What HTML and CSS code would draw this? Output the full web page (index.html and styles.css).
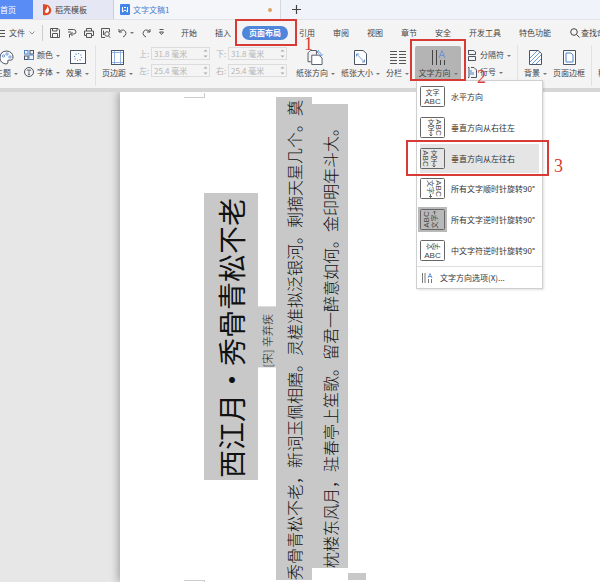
FILE: index.html
```html
<!DOCTYPE html>
<html lang="zh-CN">
<head>
    <meta charset="UTF-8">
    <title>文字文稿1</title>
    <link rel="stylesheet" href="styles.css">
</head>
<body>
    <div class="tabs">
        <button class="tab tab-home">首页</button>
        <button class="tab tab-shell">
            <svg width="10" height="12" viewBox="0 0 10 12"><path d="M1 0L6 1Q10 4 9 8Q7 12 1 11Z" fill="#dd4a24"/><path d="M5 2Q8 5 6.500 8Q4.500 10 3 8Q3 6 4.500 5Q5.500 4 5 2Z" fill="#fff"/></svg>
            稻壳模板
        </button>
        <button class="tab tab-doc">
            <svg width="10" height="11" viewBox="0 0 10 11"><rect width="10" height="11" rx="1" fill="#4285e8"/><path d="M2.500 3V8L5 6L7.500 8V3M4 3.500H6" fill="none" stroke="#fff"/></svg>
            文字文稿1
            <span class="unsaved"></span>
        </button>
        <button class="tab-add" aria-label="新建"><svg width="9" height="9" viewBox="0 0 9 9"><path d="M4.500 0V9M0 4.500H9" stroke="#444" stroke-width="1.200"/></svg></button>
    </div>

    <div class="menubar">
        <button class="file-btn">
            <svg width="5" height="8" viewBox="0 0 5 8"><path d="M0 1.500H5M0 4.500H5M0 7.500H5" stroke="#555"/></svg>
            文件
            <svg width="6" height="4" viewBox="0 0 6 4"><path d="M0.500 0.500L3 3L5.500 0.500" fill="none" stroke="#777" stroke-width="0.800"/></svg>
        </button>
        <span class="bar-line"></span>
        <div class="quick">
            <button aria-label="保存"><svg width="10" height="10" viewBox="0 0 10 10"><path d="M0.500 0.500H8L9.500 2V9.500H0.500ZM2.500 0.500V3H7V0.500M2.500 9.500V5.500H7.500V9.500"/></svg></button>
            <button aria-label="输出"><svg width="10" height="10" viewBox="0 0 10 10"><path d="M1 1.500H6.500Q9 1.500 9 4Q9 6 6.500 6H3.500M1 4H4M5.500 4L3.500 6L5.500 8M2.500 6V9.500"/></svg></button>
            <button aria-label="打印"><svg width="10" height="10" viewBox="0 0 10 10"><path d="M2.500 3V0.500H7.500V3M2.500 7.500H0.500V3H9.500V7.500H7.500M2.500 5.500H7.500V9.500H2.500Z"/></svg></button>
            <button aria-label="打印预览"><svg width="10" height="10" viewBox="0 0 10 10"><path d="M4 9.500H0.500V0.500H8.500V4M7.500 8L9.500 9.800M2.500 2.500V7"/><circle cx="6" cy="6" r="2.300"/></svg></button>
            <button class="undo" aria-label="撤销"><svg width="9" height="10" viewBox="0 0 9 10"><path d="M1 1V4H4M1 4Q3 1.500 5.500 2Q8 3 8 5.500Q7.500 8 5 9"/></svg><i class="caret"></i></button>
            <button aria-label="恢复"><svg width="9" height="10" viewBox="0 0 9 10"><path d="M8 1V4H5M8 4Q6 1.500 3.500 2Q1 3 1 5.500Q1.500 8 4 9"/></svg></button>
            <button aria-label="更多"><svg width="7" height="7" viewBox="0 0 7 7"><path d="M1.500 0.500H5.500M1.500 3H5.500L3.500 5.500Z"/></svg></button>
        </div>
        <div class="menu-tabs">
            <button>开始</button>
            <button>插入</button>
            <div class="marked">
                <button class="active">页面布局</button>
                <span class="frame frame-1"></span><span class="num num-1">1</span>
            </div>
            <button>引用</button>
            <button>审阅</button>
            <button>视图</button>
            <button>章节</button>
            <button>安全</button>
            <button>开发工具</button>
            <button>特色功能</button>
        </div>
        <button class="search">
            <svg width="10" height="10" viewBox="0 0 10 10"><circle cx="4" cy="4" r="3.300" fill="none" stroke="#444"/><path d="M6.500 6.500L9.500 9.500" stroke="#444"/></svg>
            查找命令
        </button>
    </div>

    <div class="ribbon">
        <button class="tool theme">
            <svg width="15" height="15" viewBox="0 0 15 15"><path d="M1 8Q1 1 8 1Q14 2 14 7Q14 11 10 10Q8 10 9 12Q9 14 7 14Q1 13 1 8Z" fill="#fff" stroke="#4c5563"/><circle cx="4.500" cy="6" r="1.200" fill="none" stroke="#4c82cf" stroke-width="0.800"/><circle cx="8" cy="4" r="1.200" fill="none" stroke="#4c82cf" stroke-width="0.800"/><circle cx="11" cy="7" r="1.200" fill="none" stroke="#4c82cf" stroke-width="0.800"/></svg>
            <span>主题<i class="caret"></i></span>
        </button>
        <div class="stack">
            <button class="mini">
                <svg width="10" height="10" viewBox="0 0 10 10" fill="none" stroke="#4c5563"><rect x="0.500" y="0.500" width="3.500" height="3.500" stroke="#4c82cf"/><rect x="6" y="0.500" width="3.500" height="3.500"/><rect x="0.500" y="6" width="3.500" height="3.500"/><rect x="5" y="5" width="4.500" height="4.500" stroke="#4c82cf"/></svg>
                <span>颜色<i class="caret"></i></span>
            </button>
            <button class="mini">
                <svg width="10" height="10" viewBox="0 0 10 10" fill="none" stroke="#4c5563"><circle cx="5" cy="5" r="4.500"/><path d="M3 3.500V3H7V3.500M5 3V7.500M4 7.500H6" stroke-width="0.800"/></svg>
                <span>字体<i class="caret"></i></span>
            </button>
        </div>
        <button class="tool">
            <svg width="16" height="15" viewBox="0 0 16 15"><rect x="0.500" y="0.500" width="15" height="13" fill="#fff" stroke="#4c5563"/><circle cx="8" cy="7" r="3.500" fill="none" stroke="#4c82cf" stroke-width="1.200" stroke-dasharray="1 1.700"/></svg>
            <span>效果<i class="caret"></i></span>
        </button>
        <span class="split"></span>
        <button class="tool">
            <svg width="13" height="15" viewBox="0 0 13 15"><rect x="0.500" y="0.500" width="12" height="14" fill="#fff" stroke="#4c5563"/><path d="M3.500 1V14M9.500 1V14M1 2.500H12M1 12.500H12" stroke="#79a5dd" stroke-width="0.800"/></svg>
            <span>页边距<i class="caret"></i></span>
        </button>
        <div class="margins">
            <label for="mTop">上:</label>
            <div class="spin"><input type="text" id="mTop" value="31.8 毫米" disabled><svg width="5" height="9" viewBox="0 0 5 9"><path d="M0.500 2.500L2.500 0.500L4.500 2.500ZM0.500 6.500L2.500 8.500L4.500 6.500Z"/></svg></div>
            <label for="mBottom" class="second">下:</label>
            <div class="spin"><input type="text" id="mBottom" value="31.8 毫米" disabled><svg width="5" height="9" viewBox="0 0 5 9"><path d="M0.500 2.500L2.500 0.500L4.500 2.500ZM0.500 6.500L2.500 8.500L4.500 6.500Z"/></svg></div>
            <label for="mLeft">左:</label>
            <div class="spin"><input type="text" id="mLeft" value="25.4 毫米" disabled><svg width="5" height="9" viewBox="0 0 5 9"><path d="M0.500 2.500L2.500 0.500L4.500 2.500ZM0.500 6.500L2.500 8.500L4.500 6.500Z"/></svg></div>
            <label for="mRight" class="second">右:</label>
            <div class="spin"><input type="text" id="mRight" value="25.4 毫米" disabled><svg width="5" height="9" viewBox="0 0 5 9"><path d="M0.500 2.500L2.500 0.500L4.500 2.500ZM0.500 6.500L2.500 8.500L4.500 6.500Z"/></svg></div>
        </div>
        <button class="tool">
            <svg width="17" height="16" viewBox="0 0 17 16" fill="none" stroke="#4c5563"><path d="M4 12.500H0.500V3L3 0.500H9.500V5"/><path d="M4.500 5.500H12L15.500 8.500V15.500H4.500Z" fill="#fff"/><path d="M10 2Q14.500 1 14.500 6M12.500 4.500L14.500 6.500L16.500 4.500M12 0L10 2L12 4" stroke="#4c82cf" stroke-width="0.800"/></svg>
            <span>纸张方向<i class="caret"></i></span>
        </button>
        <button class="tool">
            <svg width="13" height="15" viewBox="0 0 13 15"><path d="M0.500 0.500H9L12.500 3.500V14.500H0.500Z" fill="#fff" stroke="#4c5563"/><path d="M2.500 4L10.500 12M2.500 6.500V4H5M10.500 9.500V12H8" fill="none" stroke="#4c82cf" stroke-width="0.800"/></svg>
            <span>纸张大小<i class="caret"></i></span>
        </button>
        <button class="tool">
            <svg width="16" height="15" viewBox="0 0 16 15"><path d="M0 1.500H7M0 4.500H7M0 7.500H7M0 10.500H7M0 13.500H7M9 1.500H16M9 4.500H16M9 7.500H16M9 10.500H16M9 13.500H16" stroke="#555"/></svg>
            <span>分栏<i class="caret"></i></span>
        </button>
        <div class="marked">
            <button class="tool pressed">
                <svg width="15" height="15" viewBox="0 0 15 15" fill="none" stroke="#444"><path d="M1.500 0V15M5.500 0V15M9.500 10V15M13.500 10V15"/><path d="M8 8L11 0.500L14 8M9 5.500H13" stroke="#6f93d6"/></svg>
                <span>文字方向<i class="caret"></i></span>
            </button>
            <div class="dropdown">
                <button class="item">
                    <svg class="dir" viewBox="0 0 25 21"><rect x="0.500" y="0.500" width="24" height="20" rx="1"/><text x="12.500" y="9">文字</text><text class="abc" x="12.500" y="18">ABC</text></svg>
                    水平方向
                </button>
                <button class="item">
                    <svg class="dir" viewBox="0 0 25 21"><rect x="0.500" y="0.500" width="24" height="20" rx="1"/><text x="11" y="8">文</text><text x="11" y="15">字</text><path d="M11 15.500V19M9.500 17.500L11 19L12.500 17.500"/><text class="abc" transform="translate(16 10.500) rotate(90)">ABC</text></svg>
                    垂直方向从右往左
                </button>
                <div class="marked">
                    <button class="item hover">
                        <svg class="dir" viewBox="0 0 25 21"><rect x="0.500" y="0.500" width="24" height="20" rx="1"/><text x="14" y="8">文</text><text x="14" y="15">字</text><path d="M14 15.500V19M12.500 17.500L14 19L15.500 17.500"/><text class="abc" transform="translate(3 10.500) rotate(90)">ABC</text></svg>
                        垂直方向从左往右
                    </button>
                    <span class="frame frame-3"></span><span class="num num-3">3</span>
                </div>
                <button class="item">
                    <svg class="dir" viewBox="0 0 25 21"><rect x="0.500" y="0.500" width="24" height="20" rx="1"/><text transform="translate(8 9) rotate(90)">文字</text><path d="M10.500 16V19.500M9 18L10.500 19.500L12 18"/><text class="abc" transform="translate(16 10.500) rotate(90)">ABC</text></svg>
                    所有文字顺时针旋转90°
                </button>
                <button class="item current">
                    <svg class="dir" viewBox="0 0 25 21"><rect x="0.500" y="0.500" width="24" height="20" rx="1"/><text class="abc" transform="translate(9 10.500) rotate(-90)">ABC</text><text transform="translate(17 12.500) rotate(-90)">文字</text><path d="M14.500 5.500V2M13 3.500L14.500 2L16 3.500"/></svg>
                    所有文字逆时针旋转90°
                </button>
                <button class="item">
                    <svg class="dir" viewBox="0 0 25 21"><rect x="0.500" y="0.500" width="24" height="20" rx="1"/><text transform="translate(11.500 6.500) rotate(-90)">文</text><text transform="translate(18.500 6.500) rotate(-90)">字</text><text class="abc" x="12.500" y="18">ABC</text></svg>
                    中文字符逆时针旋转90°
                </button>
                <button class="item options">
                    <svg width="11" height="10" viewBox="0 0 11 10" fill="none" stroke="#555" stroke-width="0.800"><path d="M0.500 0V10M3 0V10M6.500 6V10M9.500 6V10"/><path d="M6 5L8 0.500L10 5M6.500 3.500H9.500" stroke="#4c82cf"/></svg>
                    文字方向选项(X)...
                </button>
            </div>
            <span class="frame frame-2"></span><span class="num num-2">2</span>
        </div>
        <div class="stack">
            <button class="mini">
                <svg width="10" height="11" viewBox="0 0 10 11" fill="none" stroke="#4c5563"><path d="M1.500 0V4.500H8.500V2L7 0.500H1.500M1.500 11V6.500H8.500V10.500H1.500"/></svg>
                <span>分隔符<i class="caret"></i></span>
            </button>
            <button class="mini">
                <svg width="10" height="11" viewBox="0 0 10 11" fill="none" stroke="#4c5563"><path d="M4 0.500H7L9.500 3V10.500H4M1 0.500H2V10.500H1"/><path d="M4 3V8M6 5V8" stroke="#4c82cf"/></svg>
                <span>行号<i class="caret"></i></span>
            </button>
        </div>
        <span class="split"></span>
        <button class="tool">
            <svg width="13" height="15" viewBox="0 0 13 15"><path d="M0.500 0.500H9L12.500 3.500V14.500H0.500Z" fill="#fff" stroke="#4c5563"/><path d="M1 8L8 1M1 12L11 2M3 14L12 5M7 14L12 9" stroke="#4c82cf" stroke-width="0.800"/></svg>
            <span>背景<i class="caret"></i></span>
        </button>
        <button class="tool">
            <svg width="13" height="15" viewBox="0 0 13 15"><path d="M0.500 0.500H12.500V14.500H0.500Z" fill="#fff" stroke="#4c5563"/><path d="M3 3H8L10 5V12H3Z" fill="#fff" stroke="#4c82cf"/></svg>
            <span>页面边框</span>
        </button>
        <span class="split"></span>
        <button class="tool">
            <svg width="16" height="15" viewBox="0 0 16 15"><rect x="2.500" y="0.500" width="11" height="14" fill="#fff" stroke="#4c5563"/></svg>
            <span>稿纸设置</span>
        </button>
    </div>

    <div class="workspace">
        <div class="page">
            <span class="corner corner-top"></span>
            <span class="corner corner-bottom"></span>
            <h1 class="line title">西江月・秀骨青松不老</h1>
            <p class="line author">[宋] 辛弃疾</p>
            <p class="line verse verse-1">秀骨青松不老，新词玉佩相磨。灵槎准拟泛银河。剩摘天星几个。奠</p>
            <p class="line verse verse-2">枕楼东风月，驻春亭上笙歌。留君一醉意如何。金印明年斗大。</p>
            <span class="line-end"></span>
        </div>
    </div>
</body>
</html>
```

FILE: styles.css
```css
* {
    box-sizing: border-box;
}
body {
    margin: 0;
    height: 100vh;
    display: flex;
    flex-direction: column;
    overflow: hidden;
    background: #f4f4f4;
    color: #444;
    font-family: "Noto Sans CJK SC", sans-serif;
    font-size: 8px;
    line-height: 12px;
}
button {
    display: flex;
    align-items: center;
    flex-shrink: 0;
    margin: 0;
    padding: 0;
    border: none;
    background: none;
    color: inherit;
    font: inherit;
    white-space: nowrap;
    cursor: pointer;
}
svg {
    display: block;
    flex-shrink: 0;
}
.caret {
    display: inline-block;
    margin-left: 3px;
    border: 2px solid transparent;
    border-top-color: #777;
    border-bottom: none;
    vertical-align: middle;
}

/* document tabs */
.tabs {
    display: flex;
    flex-shrink: 0;
    height: 20px;
    background: #f1f3fa;
    border-bottom: 1px solid #e2e4ea;
}
.tab {
    gap: 3px;
}
.tab-home {
    width: 33px;
    background: #5a8cf5;
    color: #fff;
}
.tab-shell {
    width: 81px;
    padding-left: 9px;
    background: #e5e8f4;
    border-right: 1px solid #c9cdda;
}
.tab-doc {
    width: 167px;
    padding: 0 8px 0 6px;
    background: #f5f6fa;
    border-right: 1px solid #d6d9e2;
    color: #4a7fd0;
}
.unsaved {
    width: 4px;
    height: 4px;
    margin-left: auto;
    border-radius: 50%;
    background: #d9a560;
}
.tab-add {
    padding: 0 11px;
}

/* menu bar */
.menubar {
    display: flex;
    flex-shrink: 0;
    align-items: center;
    height: 25px;
}
.file-btn {
    gap: 4px;
    width: 42px;
}
.bar-line {
    flex-shrink: 0;
    width: 1px;
    height: 16px;
    background: #ccc;
}
.quick {
    display: flex;
    flex-shrink: 0;
    gap: 7px;
    width: 138px;
    padding-left: 7px;
}
.quick svg {
    fill: none;
    stroke: #555;
    stroke-width: 1;
}
.undo {
    padding-right: 1px;
}
.menu-tabs {
    display: flex;
    flex-shrink: 0;
    align-items: center;
    gap: 18px;
}
.menu-tabs .active {
    height: 14px;
    margin: 0 -7px;
    padding: 0 7px;
    border-radius: 7px;
    background: #4f86dc;
    color: #fff;
    font-weight: bold;
}
.search {
    gap: 1px;
    margin-left: 19px;
}

/* ribbon */
.ribbon {
    display: flex;
    flex-shrink: 0;
    gap: 6px;
    height: 43px;
}
.tool {
    flex-direction: column;
    gap: 2px;
    height: 34px;
    padding-top: 4px;
    margin-top: 1px;
}
.tool svg {
    height: 15px;
}
.theme {
    margin-left: -5px;
}
.pressed {
    width: 46px;
    border-radius: 2px 2px 0 0;
    background: #b4b4b4;
}
.stack {
    display: flex;
    flex-direction: column;
    gap: 5px;
    padding-top: 4px;
}
.mini {
    gap: 3px;
}
.split {
    flex-shrink: 0;
    width: 1px;
    height: 41px;
    background: #e2e2e2;
}
.margins {
    display: grid;
    grid-template-columns: 12px 59px 18px 59px;
    gap: 4px 0;
    align-content: start;
    padding: 2px 3px 0 0;
    color: #b5b5b5;
}
.margins label {
    line-height: 13px;
}
.margins .second {
    padding-left: 6px;
}
.spin {
    display: flex;
    align-items: center;
    height: 13px;
    padding-right: 1px;
    border: 1px solid #dcdcdc;
}
.spin input {
    flex: 1;
    min-width: 0;
    padding: 0 2px;
    border: none;
    background: none;
    color: #b5b5b5;
    font: inherit;
}
.spin path {
    fill: #aaa;
}

/* text direction menu */
.dropdown {
    position: absolute;
    z-index: 2;
    top: 35px;
    left: 1px;
    width: 127px;
    background: #fff;
    border: 1px solid #cfcfcf;
    box-shadow: 1px 1px 2px rgba(0,0,0,0.12);
}
.item {
    gap: 6px;
    width: 119px;
    height: 29px;
    margin: 1px 3px;
    color: #333;
}
.item + .item,
.dropdown .marked {
    margin-top: 2px;
}
.hover {
    background: #e5e5e5;
}
.dir {
    width: 25px;
    height: 21px;
    fill: none;
    stroke: #666;
    stroke-width: 1;
}
.dir text {
    fill: #444;
    stroke: none;
    font-size: 7px;
    text-anchor: middle;
}
.dir .abc {
    font-family: "Liberation Sans", sans-serif;
    font-size: 8px;
}
.current .dir {
    background: #b9b9b9;
    outline: 2px solid #b9b9b9;
}
.item.options {
    gap: 7px;
    width: 100%;
    height: 22px;
    margin: 0;
    padding-left: 5px;
    border-top: 1px solid #ddd;
}

/* step marks */
.marked {
    position: relative;
}
.frame {
    position: absolute;
    z-index: 3;
    border: 2px solid #d83a35;
    pointer-events: none;
}
.frame-1 {
    inset: -7px -16px -6px -14px;
}
.frame-2 {
    top: -6px;
    left: -5px;
    width: 56px;
    height: 42px;
}
.frame-3 {
    inset: -4px -7px -3px -11px;
}
.num {
    position: absolute;
    z-index: 3;
    color: #d83a35;
    font-family: "Liberation Serif", serif;
    font-size: 18px;
    line-height: 18px;
}
.num-1 {
    top: 9px;
    left: 55px;
}
.num-2 {
    top: 23px;
    left: 62px;
}
.num-3 {
    top: 13px;
    right: -21px;
}

/* document */
.workspace {
    display: flex;
    flex: 1;
    min-height: 0;
    padding-left: 120px;
    overflow: hidden;
    border-top: 4px solid #d6d6d6;
    background: #e7e7e7;
}
.page {
    position: relative;
    display: flex;
    flex: 1;
    align-items: center;
    padding: 1px 0 2px 84px;
    background: #fff;
    box-shadow: -2px 0 8px rgba(0,0,0,0.3);
}
.corner {
    position: absolute;
    left: 64px;
    width: 21px;
    height: 5px;
    border: 1px solid #ccc;
    border-left: none;
}
.corner-top {
    top: 1px;
    border-top: none;
}
.corner-bottom {
    bottom: -3px;
    border-bottom: none;
}
/* lines run from the bottom up */
.line {
    flex-shrink: 0;
    margin: 0;
    background: #c8c8c8;
    color: #111;
    font-weight: 300;
    white-space: nowrap;
    writing-mode: vertical-rl;
    text-orientation: sideways;
    transform: rotate(180deg);
}
.title {
    padding: 2px 0 5px;
    font-size: 28px;
    font-weight: 400;
    line-height: 54px;
}
.author {
    padding-bottom: 8px;
    font-size: 11px;
    line-height: 18px;
}
.verse {
    font-size: 16px;
    line-height: 36px;
}
.verse-1 {
    align-self: flex-end;
    padding-bottom: 3px;
}
.verse-2 {
    padding-bottom: 16px;
}
.line-end {
    align-self: flex-end;
    width: 18px;
    height: 7px;
    background: #c8c8c8;
}
```
